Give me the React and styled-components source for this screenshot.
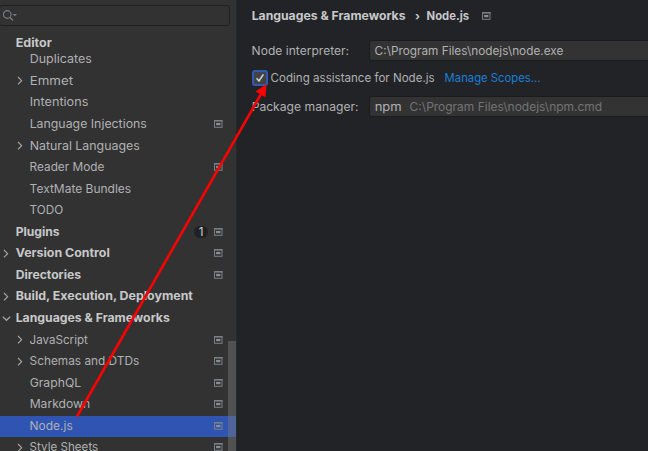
import React from 'react';
import styled, { createGlobalStyle, css } from 'styled-components';

const GlobalStyle = createGlobalStyle`
  * { box-sizing: border-box; }
  body { margin: 0; background: #222327; overflow: hidden; }
`;

const Window = styled.div`
  position: relative;
  display: flex;
  width: 648px;
  height: 451px;
  overflow: hidden;
  background: #222327;
  color: #b0b1b2;
  font: 400 11.5px/16px Inter, "Noto Sans", sans-serif;
`;

const Label = styled.span`
  display: inline-block;
  padding-left: 0.6px;
  white-space: pre;
  transform: scaleX(${(p) => p.$stretch || 1});
  transform-origin: 0 50%;
  ${(p) => p.$bold && css`font-weight: 700; color: #c8c9ca;`}
  ${(p) => p.$muted && css`color: #737476;`}
`;

const Sidebar = styled.aside`
  position: relative;
  display: flex;
  flex-direction: column;
  flex: 0 0 237px;
  height: 451px;
  overflow: hidden;
  background: #323232;
  border-right: 1px solid #27282b;
`;

const SearchField = styled.div`
  display: flex;
  align-items: center;
  flex: none;
  width: 231px;
  height: 21px;
  margin: 5px 0 0 -1px;
  padding-left: 3px;
  border: 1px solid #1f1f20;
  border-radius: 3px;
`;

const StickyHeader = styled.div`
  flex: none;
  height: 23px;
  padding: 9px 0 0 15px;
`;

const Tree = styled.div`
  flex: none;
`;

const Row = styled.div`
  display: flex;
  align-items: center;
  height: 21.57px;
  padding: 0 13.5px 1px ${(p) => (p.$top ? 2 : 16)}px;
  background: ${(p) => (p.$selected ? '#2f54b2' : 'transparent')};
`;

const Toggle = styled.span`
  display: flex;
  flex: 0 0 13px;
`;

const Grow = styled.span`
  flex: 1;
`;

const Badge = styled.span`
  width: 14px;
  height: 12px;
  margin-right: 5.5px;
  border-radius: 6px;
  background: #1f2124;
  text-align: center;
  line-height: 12px;
  color: #d5d6d7;
`;

const Scrollbar = styled.div`
  position: absolute;
  right: 0;
  bottom: 0;
  width: 8px;
  height: 110px;
  background: rgba(120, 120, 120, 0.45);
`;

const Content = styled.main`
  display: flex;
  flex-direction: column;
  flex: 1;
  min-width: 0;
  padding: 8px 0 0 14px;
`;

const Breadcrumb = styled.div`
  display: flex;
  align-items: center;
  height: 16px;
  margin-bottom: 16px;
`;

const Crumb = styled.span`
  flex: 0 0 ${(p) => p.$width}px;
  display: flex;
  align-items: center;
`;

const Field = styled.div`
  display: flex;
  align-items: center;
  height: 21px;
`;

const FieldName = styled.span`
  flex: 0 0 118px;
`;

const Input = styled.div`
  display: flex;
  align-items: center;
  flex: 1;
  height: 21px;
  margin-right: -4px;
  padding-left: 4px;
  border: 1px solid #1b1b1d;
  border-radius: 3px;
  background: #333333;
`;

const InputPart = styled.span`
  flex: 0 0 ${(p) => p.$width || 200}px;
`;

const CheckRow = styled.div`
  display: flex;
  align-items: center;
  height: 16px;
  margin: 8.5px 0 10.5px 1px;
`;

const CheckBox = styled.span`
  display: flex;
  align-items: center;
  justify-content: center;
  width: 16px;
  height: 16px;
  margin-right: 2px;
  border: 2px solid #3159b4;
  border-radius: 3px;
  background: #414345;
`;

const CheckText = styled.span`
  flex: 0 0 173.5px;
`;

const Link = styled.a`
  color: #1a7fd6;
`;

const ArrowOverlay = styled.svg`
  position: absolute;
  inset: 0;
  pointer-events: none;
`;

const ProjectIcon = () => (
  <svg width="9" height="8" viewBox="0 0 9 8" fill="none">
    <rect x="0.5" y="0.5" width="7.5" height="6.8" stroke="#788086" />
    <path d="M0 .8H8.5" stroke="#788086" strokeWidth="1.6" />
    <rect x="2.1" y="2.9" width="4.3" height="2.3" fill="#879096" />
  </svg>
);

const Chevron = ({ open }) => (
  <svg width="9" height="9" viewBox="0 0 9 9" fill="none" stroke="#a2a3a4" strokeWidth="1.2">
    <path d={open ? 'M.8 2.7L4.5 6.3L8.2 2.7' : 'M2 1L5.6 4.7L2 8.4'} />
  </svg>
);

const SearchIcon = () => (
  <svg width="15" height="13" viewBox="0 0 15 13" fill="none" stroke="#777c80" strokeWidth="1.2">
    <circle cx="4.2" cy="5.5" r="3.8" />
    <path d="M7 8.4L10 11.5" strokeWidth="1.4" />
    <path d="M9.6 5H14L11.8 7.2Z" fill="#777c80" stroke="none" />
  </svg>
);

const CheckMark = () => (
  <svg width="10" height="10" viewBox="0 0 10 10" fill="none" stroke="#d0d1d2" strokeWidth="1.6">
    <path d="M1.6 5.2L4 8L8.4 1.4" />
  </svg>
);

const rows = [
  { text: 'Duplicates', stretch: 1.085 },
  { text: 'Emmet', stretch: 1.156, toggle: true },
  { text: 'Intentions', stretch: 1.1 },
  { text: 'Language Injections', stretch: 1.072, icon: true },
  { text: 'Natural Languages', stretch: 1.076, toggle: true },
  { text: 'Reader Mode', stretch: 1.026, icon: true },
  { text: 'TextMate Bundles', stretch: 1.043 },
  { text: 'TODO', stretch: 1.02 },
  { text: 'Plugins', stretch: 1.053, top: true, icon: true, badge: '1' },
  { text: 'Version Control', stretch: 1.077, top: true, toggle: true, icon: true },
  { text: 'Directories', stretch: 1.059, top: true, icon: true },
  { text: 'Build, Execution, Deployment', stretch: 1.078, top: true, toggle: true },
  { text: 'Languages & Frameworks', stretch: 1.065, top: true, toggle: true, open: true },
  { text: 'JavaScript', stretch: 1.009, toggle: true, icon: true },
  { text: 'Schemas and DTDs', stretch: 1.028, toggle: true, icon: true },
  { text: 'GraphQL', stretch: 1.062, icon: true },
  { text: 'Markdown', stretch: 1.055, icon: true },
  { text: 'Node.js', stretch: 1.039, icon: true, selected: true },
  { text: 'Style Sheets', stretch: 1.01, toggle: true, icon: true },
];

const TreeRow = ({ text, stretch, top, toggle, open, icon, badge, selected }) => (
  <Row $top={top} $selected={selected}>
    <Toggle>{toggle && <Chevron open={open} />}</Toggle>
    <Label $bold={top} $stretch={stretch}>{text}</Label>
    <Grow />
    {badge && <Badge>{badge}</Badge>}
    {icon && <ProjectIcon />}
  </Row>
);

export default function App() {
  return (
    <Window>
      <GlobalStyle />
      <Sidebar>
        <SearchField><SearchIcon /></SearchField>
        <StickyHeader><Label $bold $stretch={1.089}>Editor</Label></StickyHeader>
        <Tree>{rows.map((row) => <TreeRow key={row.text} {...row} />)}</Tree>
        <Scrollbar />
      </Sidebar>
      <Content>
        <Breadcrumb>
          <Crumb $width={163.5}><Label $bold $stretch={1.063}>Languages &amp; Frameworks</Label></Crumb>
          <Crumb $width={11.5}><Label $bold>›</Label></Crumb>
          <Crumb $width={56}><Label $bold $stretch={0.98}>Node.js</Label></Crumb>
          <ProjectIcon />
        </Breadcrumb>
        <Field>
          <FieldName><Label $stretch={1.049}>Node interpreter:</Label></FieldName>
          <Input><InputPart><Label $stretch={1.026}>{'C:\\Program Files\\nodejs\\node.exe'}</Label></InputPart></Input>
        </Field>
        <CheckRow>
          <CheckBox><CheckMark /></CheckBox>
          <CheckText><Label $stretch={1.006}>Coding assistance for Node.js</Label></CheckText>
          <Link><Label $stretch={0.982}>Manage Scopes…</Label></Link>
        </CheckRow>
        <Field>
          <FieldName><Label $stretch={1.055}>Package manager:</Label></FieldName>
          <Input>
            <InputPart $width={34.5}><Label $stretch={1.133}>npm</Label></InputPart>
            <InputPart><Label $muted $stretch={1.041}>{'C:\\Program Files\\nodejs\\npm.cmd'}</Label></InputPart>
          </Input>
        </Field>
      </Content>
      <ArrowOverlay width="648" height="451" viewBox="0 0 648 451">
        <path d="M77 416.5L261 94" stroke="#fa0202" strokeWidth="2.6" />
        <path d="M266.5 84L265.6 97.3L255.5 91.6Z" fill="#fa0202" />
      </ArrowOverlay>
    </Window>
  );
}
